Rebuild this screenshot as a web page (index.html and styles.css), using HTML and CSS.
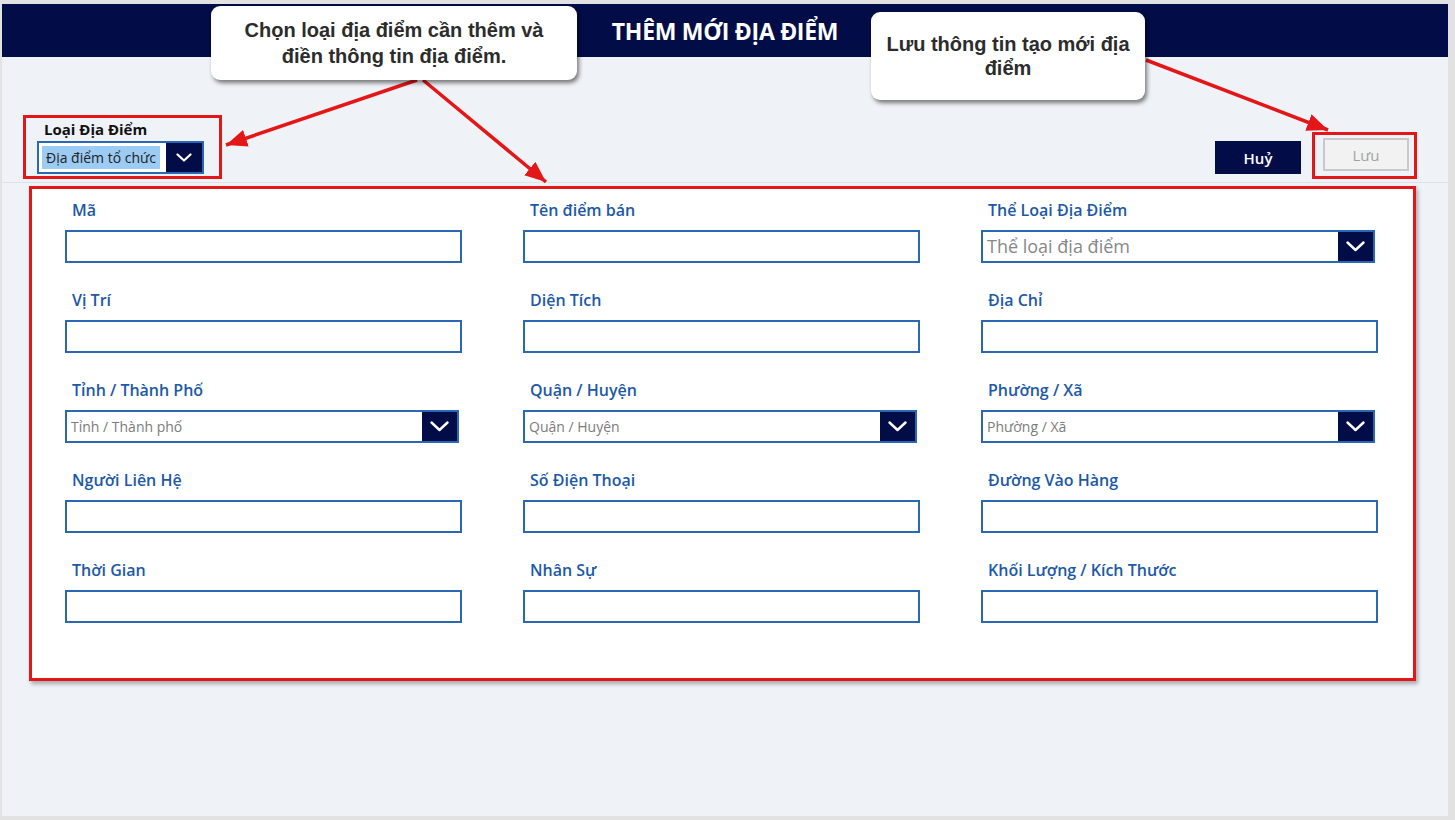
FILE: index.html
```html
<!DOCTYPE html>
<html lang="vi">

<head>
    <meta charset="UTF-8">
    <meta name="viewport" content="width=device-width, initial-scale=1.0">
    <title>Thêm mới địa điểm</title>
    <link rel="stylesheet" href="styles.css">
</head>

<body>
    <div class="window">
        <header class="topbar">
            <h1>THÊM MỚI ĐỊA ĐIỂM</h1>
        </header>

        <!-- Loại địa điểm + nút thao tác -->
        <div class="toolbar">
            <div class="type-group">
                <div class="type-label">Loại Địa Điểm</div>
                <div class="type-select">
                    <span class="type-value">Địa điểm tổ chức</span>
                    <span class="chevron small">
                        <svg width="16" height="9" viewBox="0 0 16 9"><polyline points="1.5,1.5 8,7.5 14.5,1.5" fill="none" stroke="#fff" stroke-width="2.2" stroke-linecap="round" stroke-linejoin="round"/></svg>
                    </span>
                </div>
            </div>
            <div class="actions">
                <button class="btn btn-cancel">Huỷ</button>
                <div class="save-mark">
                    <button class="btn btn-save">Lưu</button>
                </div>
            </div>
        </div>

        <!-- Form thông tin địa điểm -->
        <form class="card">
            <div class="form-grid">
                <div class="field">
                    <label>Mã</label>
                    <input type="text">
                </div>
                <div class="field">
                    <label>Tên điểm bán</label>
                    <input type="text">
                </div>
                <div class="field">
                    <label>Thể Loại Địa Điểm</label>
                    <div class="dropdown large">
                        <span class="placeholder">Thể loại địa điểm</span>
                        <span class="chevron">
                            <svg width="19" height="11" viewBox="0 0 19 11"><polyline points="1.5,1.5 9.5,9 17.5,1.5" fill="none" stroke="#fff" stroke-width="2.4" stroke-linecap="round" stroke-linejoin="round"/></svg>
                        </span>
                    </div>
                </div>

                <div class="field">
                    <label>Vị Trí</label>
                    <input type="text">
                </div>
                <div class="field">
                    <label>Diện Tích</label>
                    <input type="text">
                </div>
                <div class="field">
                    <label>Địa Chỉ</label>
                    <input type="text">
                </div>

                <div class="field">
                    <label>Tỉnh / Thành Phố</label>
                    <div class="dropdown">
                        <span class="placeholder">Tỉnh / Thành phố</span>
                        <span class="chevron">
                            <svg width="19" height="11" viewBox="0 0 19 11"><polyline points="1.5,1.5 9.5,9 17.5,1.5" fill="none" stroke="#fff" stroke-width="2.4" stroke-linecap="round" stroke-linejoin="round"/></svg>
                        </span>
                    </div>
                </div>
                <div class="field">
                    <label>Quận / Huyện</label>
                    <div class="dropdown">
                        <span class="placeholder">Quận / Huyện</span>
                        <span class="chevron">
                            <svg width="19" height="11" viewBox="0 0 19 11"><polyline points="1.5,1.5 9.5,9 17.5,1.5" fill="none" stroke="#fff" stroke-width="2.4" stroke-linecap="round" stroke-linejoin="round"/></svg>
                        </span>
                    </div>
                </div>
                <div class="field">
                    <label>Phường / Xã</label>
                    <div class="dropdown">
                        <span class="placeholder">Phường / Xã</span>
                        <span class="chevron">
                            <svg width="19" height="11" viewBox="0 0 19 11"><polyline points="1.5,1.5 9.5,9 17.5,1.5" fill="none" stroke="#fff" stroke-width="2.4" stroke-linecap="round" stroke-linejoin="round"/></svg>
                        </span>
                    </div>
                </div>

                <div class="field">
                    <label>Người Liên Hệ</label>
                    <input type="text">
                </div>
                <div class="field">
                    <label>Số Điện Thoại</label>
                    <input type="text">
                </div>
                <div class="field">
                    <label>Đường Vào Hàng</label>
                    <input type="text">
                </div>

                <div class="field">
                    <label>Thời Gian</label>
                    <input type="text">
                </div>
                <div class="field">
                    <label>Nhân Sự</label>
                    <input type="text">
                </div>
                <div class="field">
                    <label>Khối Lượng / Kích Thước</label>
                    <input type="text">
                </div>
            </div>
        </form>

        <!-- Chú thích hướng dẫn -->
        <svg class="arrows" width="1446" height="812" viewBox="0 0 1446 812">
            <defs>
                <marker id="head" viewBox="0 0 6 5" markerWidth="6" markerHeight="5" refX="6" refY="2.5" orient="auto">
                    <path d="M0,0 L6,2.5 L0,5 z" fill="#e31717" />
                </marker>
            </defs>
            <line x1="415" y1="76" x2="224" y2="141" stroke="#e31717" stroke-width="3.5" marker-end="url(#head)" />
            <line x1="421" y1="76" x2="544" y2="178" stroke="#e31717" stroke-width="3.5" marker-end="url(#head)" />
            <line x1="1144" y1="56" x2="1326" y2="126" stroke="#e31717" stroke-width="3.5" marker-end="url(#head)" />
        </svg>

        <div class="callout callout-type">Chọn loại địa điểm cần thêm và<br>điền thông tin địa điểm.</div>
        <div class="callout callout-save">Lưu thông tin tạo mới địa<br>điểm</div>
    </div>
</body>

</html>
```

FILE: styles.css
```css
* {
    box-sizing: border-box;
}

body {
    margin: 0;
    height: 820px;
    overflow: hidden;
    background-color: #e2e2e2;
    font-family: "Open Sans", Arial, sans-serif;
}

.window {
    position: relative;
    margin: 4px 7px 0 2px;
    height: 812px;
    background-color: #eff2f7;
}

.topbar {
    height: 53px;
    background-color: #020c47;
    display: flex;
    justify-content: center;
    align-items: center;
}

.topbar h1 {
    margin: 0;
    color: #fff;
    font-size: 23px;
    font-weight: 700;
    letter-spacing: -0.3px;
}

/* Thanh công cụ */
.toolbar {
    display: flex;
    justify-content: space-between;
    align-items: flex-end;
    padding: 58px 31px 3px 21px;
    border-bottom: 1px solid #dde1e8;
}

.type-group {
    width: 199px;
    height: 64px;
    border: 3px solid #e31717;
    padding: 1px 0 0 11px;
}

.type-label {
    padding-left: 7px;
    font-size: 15px;
    font-weight: 700;
    line-height: 20px;
    color: #111;
}

.type-select {
    margin-top: 2px;
    width: 167px;
    height: 33px;
    border: 2px solid #2a68b5;
    background-color: #fff;
    display: flex;
}

.type-value {
    margin: 3px 0 3px 3px;
    padding: 0 4px;
    background-color: #9ccbf4;
    font-size: 14px;
    line-height: 23px;
    color: #222;
}

.actions {
    display: flex;
    align-items: flex-end;
    gap: 11px;
}

.btn {
    width: 86px;
    height: 33px;
    font-family: "Open Sans", Arial, sans-serif;
    font-size: 15px;
    cursor: pointer;
}

.btn-cancel {
    margin-bottom: 5px;
    border: none;
    background-color: #020c47;
    color: #fff;
    font-weight: 600;
}

.save-mark {
    border: 3px solid #e31717;
    padding: 3px 5px 5px 8px;
}

.btn-save {
    display: block;
    background-color: #f2f2f2;
    border: 2px solid #c9c9c9;
    color: #a2a2a2;
}

/* Form */
.card {
    margin: 3px 32px 0 27px;
    height: 495px;
    padding: 10px 0 0 33px;
    background-color: #fff;
    border: 3px solid #e31717;
    box-shadow: 2px 3px 4px rgba(0, 0, 0, 0.3);
}

.form-grid {
    display: grid;
    grid-template-columns: repeat(3, 397px);
    column-gap: 61px;
    row-gap: 26px;
}

.field {
    display: flex;
    flex-direction: column;
    gap: 9px;
}

.field label {
    padding-left: 7px;
    font-size: 16px;
    font-weight: 600;
    line-height: 22px;
    color: #1d59a6;
}

.field input {
    width: 100%;
    height: 33px;
    border: 2px solid #2a68b5;
    outline: none;
    background-color: #fff;
}

.dropdown {
    width: 394px;
    height: 33px;
    border: 2px solid #2a68b5;
    display: flex;
    align-items: stretch;
    background-color: #fff;
}

.placeholder {
    flex: 1;
    padding-left: 4px;
    font-size: 14px;
    line-height: 29px;
    color: #7b7b7b;
}

.dropdown.large .placeholder {
    font-size: 18px;
    color: #888;
}

.chevron {
    width: 35px;
    background-color: #020c47;
    display: flex;
    justify-content: center;
    align-items: center;
}

.chevron.small {
    margin-left: auto;
    width: 36px;
}

/* Chú thích */
.arrows {
    position: absolute;
    left: 0;
    top: 0;
    pointer-events: none;
}

.callout {
    position: absolute;
    display: flex;
    align-items: center;
    justify-content: center;
    background-color: #fff;
    border-radius: 9px;
    box-shadow: 2px 3px 4px rgba(0, 0, 0, 0.5);
    font-family: "Liberation Sans", Arial, sans-serif;
    font-size: 20px;
    font-weight: 700;
    color: #2c2c2c;
    text-align: center;
}

.callout-type {
    left: 209px;
    top: 2px;
    width: 366px;
    height: 74px;
    line-height: 26px;
}

.callout-save {
    left: 869px;
    top: 8px;
    width: 274px;
    height: 88px;
    line-height: 24px;
}
```
